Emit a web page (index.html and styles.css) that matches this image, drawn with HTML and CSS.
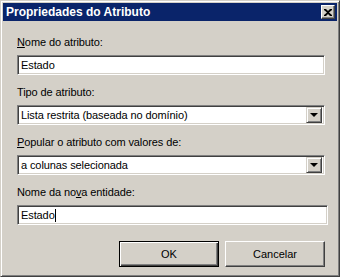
FILE: index.html
```html
<!DOCTYPE html>
<html lang="pt">
<head>
    <meta charset="UTF-8">
    <title>Propriedades do Atributo</title>
    <link rel="stylesheet" href="styles.css">
</head>
<body>
    <div class="window">
        <div class="titlebar">
            <span class="title">Propriedades do Atributo</span>
            <span class="close">
                <svg width="8" height="7" viewBox="0 0 8 7">
                    <path d="M0 0h2l2 2 2-2h2v1L5 3.5 8 6v1H6L4 5 2 7H0V6l3-2.5L0 1z" fill="#000"/>
                </svg>
            </span>
        </div>

        <div class="content">
            <div class="field">
                <label class="label"><u>N</u>ome do atributo:</label>
                <div class="box">Estado</div>
            </div>
            <div class="field">
                <label class="label">Tipo de atributo:</label>
                <div class="box combo">
                    <span class="combo__text">Lista restrita (baseada no domínio)</span>
                    <span class="combo__btn"><span class="arrow"></span></span>
                </div>
            </div>
            <div class="field">
                <label class="label"><u>P</u>opular o atributo com valores de:</label>
                <div class="box combo">
                    <span class="combo__text">a colunas selecionada</span>
                    <span class="combo__btn"><span class="arrow"></span></span>
                </div>
            </div>
            <div class="field field--wide">
                <label class="label">Nome da no<u>v</u>a entidade:</label>
                <div class="box">Estado<span class="caret"></span></div>
            </div>

            <div class="buttons">
                <button class="btn btn--default">OK</button>
                <button class="btn">Cancelar</button>
            </div>
        </div>
    </div>
</body>
</html>
```

FILE: styles.css
```css
body {
    margin: 0;
    background: #d4d0c8;
    font-family: 'Liberation Sans', Arial, sans-serif;
    font-size: 11px;
    color: #000;
}

.window {
    width: 340px;
    height: 277px;
    box-sizing: border-box;
    padding: 2px;
    background: #d4d0c8;
    border: 1px solid;
    border-color: #d4d0c8 #404040 #404040 #d4d0c8;
    box-shadow: inset 1px 1px #fff, inset -1px -1px #808080;
}

.titlebar {
    height: 18px;
    background: #0a246a;
    display: flex;
    align-items: center;
    justify-content: space-between;
    padding: 0 2px 0 3px;
}

.title {
    color: #fff;
    font-weight: bold;
    font-size: 12px;
}

.close {
    width: 14px;
    height: 14px;
    box-sizing: border-box;
    background: #d4d0c8;
    border: 1px solid;
    border-color: #fff #404040 #404040 #fff;
    box-shadow: inset -1px -1px #808080;
    display: flex;
    align-items: center;
    justify-content: center;
}

.content {
    padding: 15px 9px 0 14px;
    display: flex;
    flex-direction: column;
}

.field {
    display: flex;
    flex-direction: column;
    margin-bottom: 11px;
    margin-right: 3px;
}

.field--wide {
    margin-right: 0;
}

.label {
    line-height: 13px;
    margin-bottom: 6px;
    letter-spacing: -0.1px;
}

.box {
    height: 20px;
    box-sizing: border-box;
    background: #fff;
    border: 1px solid;
    border-color: #808080 #fff #fff #808080;
    box-shadow: inset 1px 1px #404040, inset -1px -1px #d4d0c8;
    padding: 0 3px;
    line-height: 18px;
    display: flex;
    align-items: center;
    letter-spacing: -0.1px;
}

.caret {
    display: inline-block;
    width: 1px;
    height: 13px;
    background: #000;
}

.combo {
    padding: 2px 2px 2px 3px;
    justify-content: space-between;
}

.combo__btn {
    width: 16px;
    height: 16px;
    box-sizing: border-box;
    background: #d4d0c8;
    border: 1px solid;
    border-color: #d4d0c8 #404040 #404040 #d4d0c8;
    box-shadow: inset 1px 1px #fff, inset -1px -1px #808080;
    display: flex;
    align-items: center;
    justify-content: center;
}

.arrow {
    width: 0;
    height: 0;
    border-left: 4px solid transparent;
    border-right: 4px solid transparent;
    border-top: 4px solid #000;
}

.buttons {
    display: flex;
    justify-content: flex-end;
    gap: 6px;
    margin-top: 5px;
    margin-right: 3px;
}

.btn {
    width: 100px;
    height: 26px;
    font-family: inherit;
    font-size: 11px;
    background: #d4d0c8;
    border: 1px solid;
    border-color: #fff #404040 #404040 #fff;
    box-shadow: inset -1px -1px #808080;
    padding: 0;
}

.btn--default {
    border: 1px solid #000;
    box-shadow: inset 1px 1px #fff, inset -1px -1px #404040, inset -2px -2px #808080;
}
```
